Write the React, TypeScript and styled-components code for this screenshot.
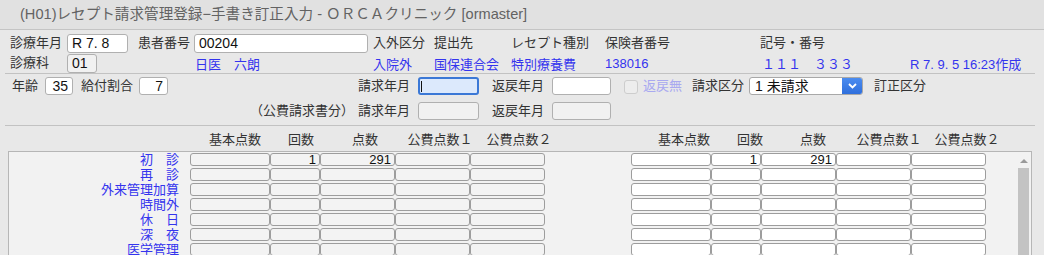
import styled, { createGlobalStyle } from "styled-components";

const GlobalStyle = createGlobalStyle`
  html, body {
    margin: 0;
    padding: 0;
  }
  body {
    background: #e8e8e8;
    font-family: "Liberation Sans", "Noto Sans CJK JP", sans-serif;
    font-size: 13px;
    color: #333;
  }
`;

const BLUE = "#3434ee";

const Window = styled.div`
  width: 1044px;
  height: 255px;
  overflow: hidden;
  background: #e8e8e8;
`;

const TitleBar = styled.div`
  height: 29px;
  line-height: 29px;
  padding-left: 20px;
  background: #e1e1e1;
  border-bottom: 1px solid #c4c4c4;
  color: #636363;
  font-size: 14.6px;
  white-space: nowrap;
`;

const TopGrid = styled.div`
  display: grid;
  grid-template-columns: 57px 71px 56px 179px 61px 77px 94px 155px 150px 1fr;
  grid-auto-rows: 20px;
  align-items: center;
  padding: 3px 0 0 10px;
`;

const MidGrid = styled.div`
  display: grid;
  grid-template-columns: 33px 36px 58px 219px 60px 74px 60px 72px 19px 49px 57px 125px 1fr;
  grid-template-rows: 25px 23px;
  align-items: start;
  padding: 3px 0 0 12px;
`;

const Separator = styled.div`
  height: 1px;
  margin: 0 9px 0 5px;
  background: #c2c2c2;
`;

const Label = styled.span<{ disabled?: boolean }>`
  white-space: nowrap;
  line-height: 18px;
  color: ${(p) => (p.disabled ? "#a9a9f0" : "#333")};
`;

const SubLabel = styled(Label)`
  grid-column: 4;
  justify-self: end;
  margin-right: 4px;
`;

const Value = styled.span<{ pad?: number }>`
  white-space: nowrap;
  color: ${BLUE};
  padding-left: ${(p) => p.pad ?? 0}px;
`;

const PatientName = styled(Value)`
  grid-column: 4;
`;

const Field = styled.div<{
  w: number;
  h?: number;
  tone?: "white" | "gray" | "focus";
  right?: boolean;
}>`
  box-sizing: border-box;
  position: relative;
  width: ${(p) => p.w}px;
  height: ${(p) => p.h ?? 18}px;
  border: ${(p) => (p.tone === "focus" ? "2px solid #3b78d6" : "1px solid #b0b0b0")};
  border-radius: 3px;
  background: ${(p) =>
    p.tone === "focus" ? "#dce9fc" : p.tone === "gray" ? "#f1f1f1" : "#fff"};
  padding: 0 ${(p) => (p.right ? 4 : 3)}px 0 ${(p) => (p.right ? 0 : 4)}px;
  text-align: ${(p) => (p.right ? "right" : "left")};
  font-size: 14px;
  line-height: ${(p) => (p.h ?? 18) - 2}px;
  color: #111;
  white-space: nowrap;

  ${(p) =>
    p.tone === "focus" &&
    `&::after {
      content: "";
      position: absolute;
      left: 1px;
      top: 2px;
      width: 1px;
      height: 11px;
      background: #111;
    }`}
`;

const CheckBox = styled.div`
  box-sizing: border-box;
  width: 14px;
  height: 14px;
  margin-top: 3px;
  border: 1px solid #cdcdcd;
  border-radius: 3px;
  background: #ededed;
`;

const Select = styled.div`
  box-sizing: border-box;
  display: flex;
  width: 114px;
  height: 18px;
  border: 1px solid #a8a8a8;
  border-radius: 3px;
  background: #fff;
  overflow: hidden;
`;

const SelectText = styled.span`
  flex: 1;
  padding-left: 5px;
  font-size: 14px;
  line-height: 16px;
  color: #111;
`;

const SelectButton = styled.div`
  width: 20px;
  display: grid;
  place-items: center;
  background: linear-gradient(#4b8cf0, #2f6fdc);
`;

const HeaderRow = styled.div`
  display: flex;
  height: 25px;
  align-items: center;
  padding-left: 202px;
`;

const HeadSlot = styled.div<{ w: number }>`
  width: ${(p) => p.w}px;
  display: flex;
  justify-content: center;
  white-space: nowrap;
  color: #333;
`;

const HeadGap = styled.div`
  width: 97px;
`;

const TableBox = styled.div`
  display: flex;
  width: 1024px;
  height: 130px;
  margin-left: 8px;
  box-sizing: border-box;
  border: 1px solid #b6b6b6;
  background: #f2f2f2;
`;

const Rows = styled.div`
  display: flex;
  flex-direction: column;
`;

const Row = styled.div`
  display: grid;
  grid-template-columns: 181px 80px 50px 75px 75px 75px 86px 80px 50px 75px 75px 75px;
  height: 15px;
`;

const RowLabel = styled.div`
  text-align: right;
  padding-right: 11px;
  color: ${BLUE};
  line-height: 15px;
  white-space: nowrap;
`;

const Cell = styled.div<{ white?: boolean }>`
  box-sizing: border-box;
  height: 13px;
  margin-top: 1px;
  border: 1px solid #9d9d9d;
  border-radius: 3px;
  background: ${(p) => (p.white ? "#fff" : "#f3f3f3")};
  text-align: right;
  padding-right: 3px;
  font-size: 13px;
  line-height: 12px;
  color: #111;
`;

const TableSpacer = styled.div`
  width: 30px;
`;

const ScrollBar = styled.div`
  width: 15px;
  display: flex;
  flex-direction: column;
  align-items: center;
  padding-top: 7px;
`;

const ScrollArrow = styled.div`
  width: 0;
  height: 0;
  border-left: 4px solid transparent;
  border-right: 4px solid transparent;
  border-bottom: 4px solid #9a9a9a;
`;

const ScrollThumb = styled.div`
  width: 11px;
  flex: 1;
  margin-top: 5px;
  background: #c3c3c3;
`;

const rowLabels = ["初　診", "再　診", "外来管理加算", "時間外", "休　日", "深　夜", "医学管理"];

const headers = ["基本点数", "回数", "点数", "公費点数１", "公費点数２"];
const leftWidths = [66, 66, 62, 88, 70];
const rightWidths = [66, 66, 60, 92, 64];

export default function App() {
  return (
    <Window>
      <GlobalStyle />
      <TitleBar>(H01)レセプト請求管理登録−手書き訂正入力 - ＯＲＣＡクリニック [ormaster]</TitleBar>

      <TopGrid>
        <Label>診療年月</Label>
        <Field w={61} h={19}>R 7. 8</Field>
        <Label>患者番号</Label>
        <Field w={174} h={19}>00204</Field>
        <Label>入外区分</Label>
        <Label>提出先</Label>
        <Label>レセプト種別</Label>
        <Label>保険者番号</Label>
        <Label>記号・番号</Label>
        <span />

        <Label>診療科</Label>
        <Field w={30} h={19} tone="gray">01</Field>
        <PatientName pad={1}>日医　六朗</PatientName>
        <Value>入院外</Value>
        <Value>国保連合会</Value>
        <Value>特別療養費</Value>
        <Value>138016</Value>
        <Value pad={2}>１１１　３３３</Value>
        <Value>R 7. 9. 5 16:23作成</Value>
      </TopGrid>

      <Separator />

      <MidGrid>
        <Label>年齢</Label>
        <Field w={28} right>35</Field>
        <Label>給付割合</Label>
        <Field w={29} right>7</Field>
        <Label>請求年月</Label>
        <Field w={61} tone="focus" />
        <Label>返戻年月</Label>
        <Field w={59} />
        <CheckBox />
        <Label disabled>返戻無</Label>
        <Label>請求区分</Label>
        <Select>
          <SelectText>1 未請求</SelectText>
          <SelectButton>
            <svg width="9" height="6" viewBox="0 0 9 6">
              <path d="M1 1l3.5 3.5L8 1" fill="none" stroke="#fff" strokeWidth="1.8" />
            </svg>
          </SelectButton>
        </Select>
        <Label>訂正区分</Label>

        <SubLabel>（公費請求書分）</SubLabel>
        <Label>請求年月</Label>
        <Field w={61} tone="gray" />
        <Label>返戻年月</Label>
        <Field w={59} tone="gray" />
      </MidGrid>

      <Separator />

      <HeaderRow>
        {headers.map((h, i) => (
          <HeadSlot key={"l" + h} w={leftWidths[i]}>{h}</HeadSlot>
        ))}
        <HeadGap />
        {headers.map((h, i) => (
          <HeadSlot key={"r" + h} w={rightWidths[i]}>{h}</HeadSlot>
        ))}
      </HeaderRow>

      <TableBox>
        <Rows>
          {rowLabels.map((label, r) => (
            <Row key={label}>
              <RowLabel>{label}</RowLabel>
              <Cell />
              <Cell>{r === 0 ? "1" : ""}</Cell>
              <Cell>{r === 0 ? "291" : ""}</Cell>
              <Cell />
              <Cell />
              <span />
              <Cell white />
              <Cell white>{r === 0 ? "1" : ""}</Cell>
              <Cell white>{r === 0 ? "291" : ""}</Cell>
              <Cell white />
              <Cell white />
            </Row>
          ))}
        </Rows>
        <TableSpacer />
        <ScrollBar>
          <ScrollArrow />
          <ScrollThumb />
        </ScrollBar>
      </TableBox>
    </Window>
  );
}
